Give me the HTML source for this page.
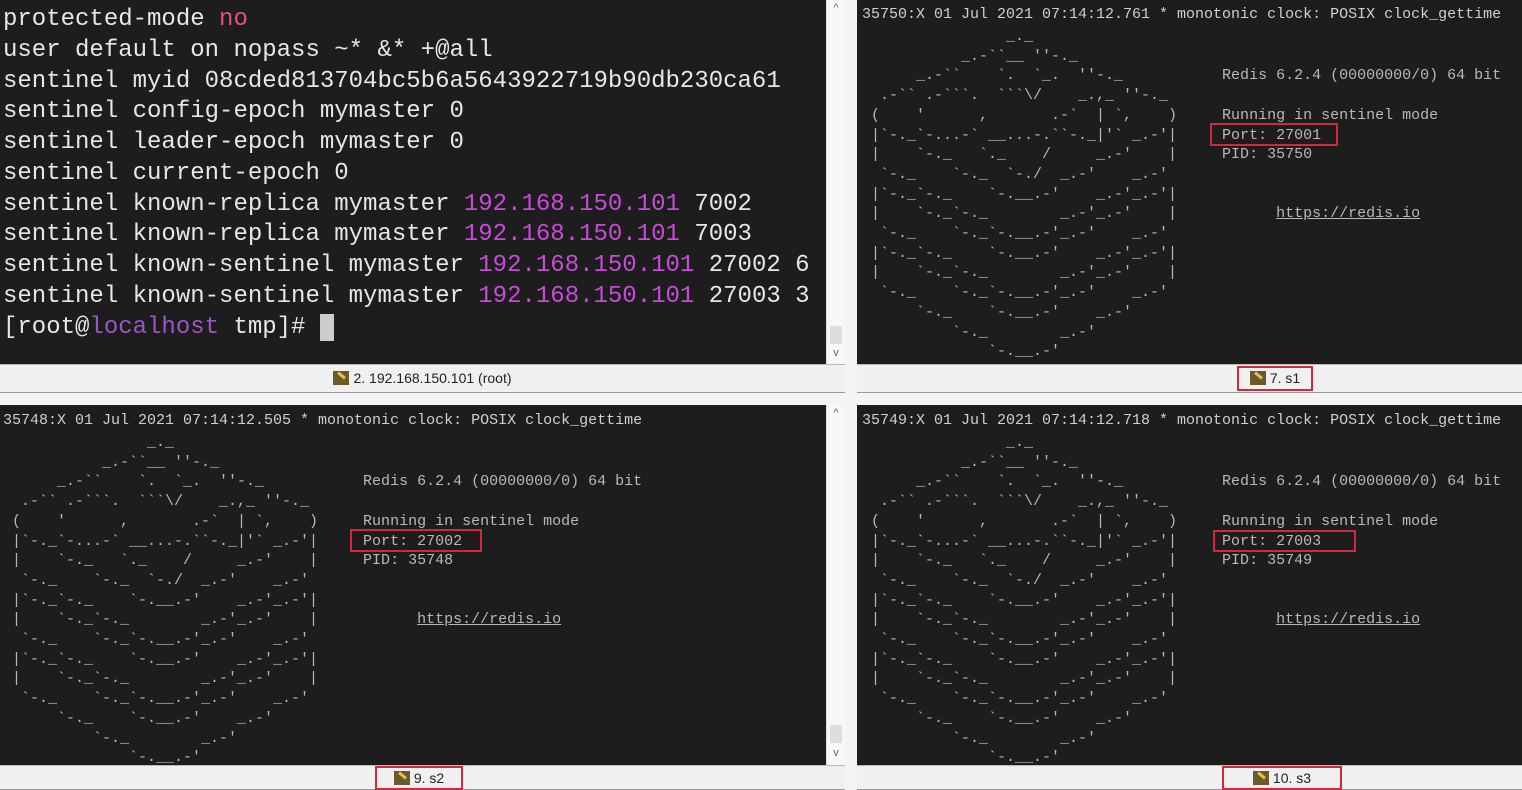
<!DOCTYPE html>
<html><head><meta charset="utf-8"><style>
*{margin:0;padding:0;box-sizing:border-box}
body{width:1522px;height:790px;background:#f4f4f4;position:relative;overflow:hidden;font-family:"Liberation Mono",monospace}
.p{position:absolute;background:#1d1d1d}
pre{position:absolute;margin:0;font-family:"Liberation Mono",monospace;color:#d8d8d8}
.big{font-size:24px;line-height:30.75px;color:#e6e6e6;left:3px;top:5px}
.sm{font-size:15px;line-height:19.7px;color:#cfcfcf}
.logo{color:#b8b8b8}
.no{color:#e4507a}.ip{color:#c84ad8}.lh{color:#9a55c8}
.sb{position:absolute;background:#f0f0f0;border-top:1px solid #bbb;border-bottom:1px solid #999;font-family:"Liberation Sans",sans-serif;font-size:14px;color:#222;text-align:center}
.scr{position:absolute;background:#f7f7f7;border-left:1px solid #ddd;color:#666;font-size:11px;text-align:center;font-family:"Liberation Sans",sans-serif}
.red{position:absolute;border:2px solid #d0283c}
.tab{position:absolute;border:2px solid #d0283c;text-align:center;font-family:"Liberation Sans",sans-serif;font-size:14px;color:#222;line-height:20px}
.ic{display:inline-block;width:16px;height:14px;background:#6b5a2a;vertical-align:-2px;margin-right:4px;position:relative}
.ic:after{content:"";position:absolute;left:4px;top:3px;width:9px;height:3px;background:#e8c050;transform:rotate(40deg)}
.u{text-decoration:underline}
</style></head><body>
<div class="p" style="left:0;top:0;width:826px;height:364px">
<pre class="big">protected-mode <span class="no">no</span>
user default on nopass ~* &amp;* +@all
sentinel myid 08cded813704bc5b6a5643922719b90db230ca61
sentinel config-epoch mymaster 0
sentinel leader-epoch mymaster 0
sentinel current-epoch 0
sentinel known-replica mymaster <span class="ip">192.168.150.101</span> 7002
sentinel known-replica mymaster <span class="ip">192.168.150.101</span> 7003
sentinel known-sentinel mymaster <span class="ip">192.168.150.101</span> 27002 6
sentinel known-sentinel mymaster <span class="ip">192.168.150.101</span> 27003 3
[root@<span class="lh">localhost</span> tmp]# <span style="background:#ccc">&nbsp;</span></pre>
</div>
<div class="scr" style="left:826px;top:0;width:19px;height:364px"><div style="position:absolute;top:2px;width:100%">^</div><div style="position:absolute;top:326px;left:3px;width:12px;height:18px;background:#ddd"></div><div style="position:absolute;top:347px;width:100%">v</div></div>
<div class="sb" style="left:0;top:364px;width:845px;height:29px;line-height:27px"><span class="ic"></span>2. 192.168.150.101 (root)</div>

<div class="p" style="left:857px;top:0;width:665px;height:364px">
<pre class="sm" style="left:5px;top:5px">35750:X 01 Jul 2021 07:14:12.761 * monotonic clock: POSIX clock_gettime</pre>
<pre class="sm logo" style="left:5px;top:27px">                _._
           _.-&#96;&#96;__ ''-._
      _.-&#96;&#96;    &#96;.  &#96;_.  ''-._           Redis 6.2.4 (00000000/0) 64 bit
  .-&#96;&#96; .-&#96;&#96;&#96;.  &#96;&#96;&#96;\/    _.,_ ''-._
 (    '      ,       .-&#96;  | &#96;,    )     Running in sentinel mode
 |&#96;-._&#96;-...-&#96; __...-.&#96;&#96;-._|'&#96; _.-'|     Port: 27001
 |    &#96;-._   &#96;._    /     _.-'    |     PID: 35750
  &#96;-._    &#96;-._  &#96;-./  _.-'    _.-'
 |&#96;-._&#96;-._    &#96;-.__.-'    _.-'_.-'|
 |    &#96;-._&#96;-._        _.-'_.-'    |           <span class="u">https://redis.io</span>
  &#96;-._    &#96;-._&#96;-.__.-'_.-'    _.-'
 |&#96;-._&#96;-._    &#96;-.__.-'    _.-'_.-'|
 |    &#96;-._&#96;-._        _.-'_.-'    |
  &#96;-._    &#96;-._&#96;-.__.-'_.-'    _.-'
      &#96;-._    &#96;-.__.-'    _.-'
          &#96;-._        _.-'
              &#96;-.__.-'</pre>
<div class="red" style="left:353px;top:123px;width:128px;height:23px"></div>
</div>
<div class="sb" style="left:857px;top:364px;width:665px;height:29px"></div>
<div class="tab" style="left:1237px;top:366px;width:76px;height:25px"><span class="ic"></span>7. s1</div>

<div class="p" style="left:0;top:405px;width:826px;height:360px">
<pre class="sm" style="left:3px;top:6px">35748:X 01 Jul 2021 07:14:12.505 * monotonic clock: POSIX clock_gettime</pre>
<pre class="sm logo" style="left:3px;top:28px">                _._
           _.-&#96;&#96;__ ''-._
      _.-&#96;&#96;    &#96;.  &#96;_.  ''-._           Redis 6.2.4 (00000000/0) 64 bit
  .-&#96;&#96; .-&#96;&#96;&#96;.  &#96;&#96;&#96;\/    _.,_ ''-._
 (    '      ,       .-&#96;  | &#96;,    )     Running in sentinel mode
 |&#96;-._&#96;-...-&#96; __...-.&#96;&#96;-._|'&#96; _.-'|     Port: 27002
 |    &#96;-._   &#96;._    /     _.-'    |     PID: 35748
  &#96;-._    &#96;-._  &#96;-./  _.-'    _.-'
 |&#96;-._&#96;-._    &#96;-.__.-'    _.-'_.-'|
 |    &#96;-._&#96;-._        _.-'_.-'    |           <span class="u">https://redis.io</span>
  &#96;-._    &#96;-._&#96;-.__.-'_.-'    _.-'
 |&#96;-._&#96;-._    &#96;-.__.-'    _.-'_.-'|
 |    &#96;-._&#96;-._        _.-'_.-'    |
  &#96;-._    &#96;-._&#96;-.__.-'_.-'    _.-'
      &#96;-._    &#96;-.__.-'    _.-'
          &#96;-._        _.-'
              &#96;-.__.-'</pre>
<div class="red" style="left:350px;top:124px;width:132px;height:23px"></div>
</div>
<div class="scr" style="left:826px;top:405px;width:19px;height:360px"><div style="position:absolute;top:2px;width:100%">^</div><div style="position:absolute;top:320px;left:3px;width:12px;height:18px;background:#ddd"></div><div style="position:absolute;top:342px;width:100%">v</div></div>
<div class="sb" style="left:0;top:765px;width:845px;height:25px"></div>
<div class="tab" style="left:375px;top:766px;width:88px;height:24px"><span class="ic"></span>9. s2</div>

<div class="p" style="left:857px;top:405px;width:665px;height:360px">
<pre class="sm" style="left:5px;top:6px">35749:X 01 Jul 2021 07:14:12.718 * monotonic clock: POSIX clock_gettime</pre>
<pre class="sm logo" style="left:5px;top:28px">                _._
           _.-&#96;&#96;__ ''-._
      _.-&#96;&#96;    &#96;.  &#96;_.  ''-._           Redis 6.2.4 (00000000/0) 64 bit
  .-&#96;&#96; .-&#96;&#96;&#96;.  &#96;&#96;&#96;\/    _.,_ ''-._
 (    '      ,       .-&#96;  | &#96;,    )     Running in sentinel mode
 |&#96;-._&#96;-...-&#96; __...-.&#96;&#96;-._|'&#96; _.-'|     Port: 27003
 |    &#96;-._   &#96;._    /     _.-'    |     PID: 35749
  &#96;-._    &#96;-._  &#96;-./  _.-'    _.-'
 |&#96;-._&#96;-._    &#96;-.__.-'    _.-'_.-'|
 |    &#96;-._&#96;-._        _.-'_.-'    |           <span class="u">https://redis.io</span>
  &#96;-._    &#96;-._&#96;-.__.-'_.-'    _.-'
 |&#96;-._&#96;-._    &#96;-.__.-'    _.-'_.-'|
 |    &#96;-._&#96;-._        _.-'_.-'    |
  &#96;-._    &#96;-._&#96;-.__.-'_.-'    _.-'
      &#96;-._    &#96;-.__.-'    _.-'
          &#96;-._        _.-'
              &#96;-.__.-'</pre>
<div class="red" style="left:356px;top:125px;width:143px;height:22px"></div>
</div>
<div class="sb" style="left:857px;top:765px;width:665px;height:25px"></div>
<div class="tab" style="left:1222px;top:766px;width:120px;height:24px"><span class="ic"></span>10. s3</div>
</body></html>
